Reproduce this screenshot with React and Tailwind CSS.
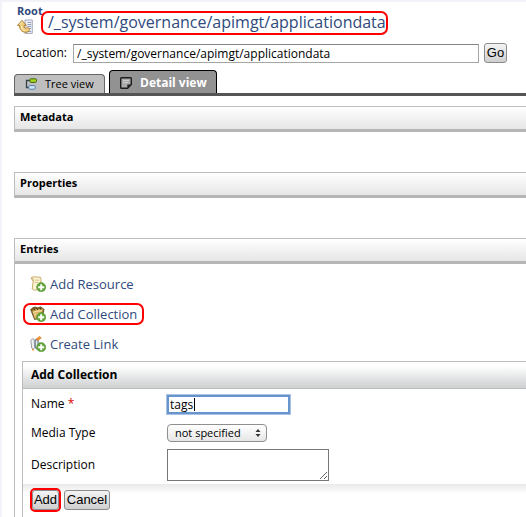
import React from "react";

function PlusBadge() {
  return (
    <g>
      <circle cx="11.2" cy="11.2" r="4.6" fill="#64a63c" stroke="#4c8f2c" strokeWidth=".5" />
      <path d="M11.2 8.2v6M8.2 11.2h6" stroke="#fff" strokeWidth="1.9" />
    </g>
  );
}

function ResourceIcon() {
  return (
    <svg className="size-4 shrink-0" viewBox="0 0 16 16" aria-hidden="true">
      <path d="M1 2.2 3 .8l7.3.4.8 2.2-.9 9.5-5.8 1.4L2.2 13l1-8z" fill="#fbf3d2" stroke="#c2a45e" strokeWidth=".9" />
      <path d="M1 2.2c1.8-.4 2.5.6 2.2 2.8" fill="none" stroke="#c2a45e" strokeWidth=".9" />
      <path d="M5 4.2h4.2M4.8 6.5h3.6" stroke="#d9bd80" strokeWidth=".9" />
      <PlusBadge />
    </svg>
  );
}

function CollectionIcon() {
  return (
    <svg className="size-4 shrink-0" viewBox="0 0 16 16" aria-hidden="true">
      <path d="M.6 3.6 3 1.6l3-.7 1 1 3.6-1 1.9 1 1.6 1.6-2 8.4-7.6 1.6z" fill="#8a6a26" stroke="#54401a" strokeWidth=".7" />
      <path d="M2.4 5 5.2 3.4l7.7-.6-1.5 6.4-6.5 3.8z" fill="#dcb562" />
      <path d="M3.1 7 6 5.2l5.9-.4M4 9.2l2.6-1.5" fill="none" stroke="#f9e8b8" strokeWidth="1" />
      <path d="M3.6 2.4l1.6 2.2M6.6 1.8l1.4 2.2M10 1.6l1 2.3" stroke="#3c2f10" strokeWidth=".9" />
      <PlusBadge />
    </svg>
  );
}

function LinkIcon() {
  return (
    <svg className="size-4 shrink-0" viewBox="0 0 16 16" aria-hidden="true">
      <path d="M.8 4.5C1.2 2.8 3 2.4 4.2 3.4l.5 8.1-1.4 1.8-1.6-1.2z" fill="#eef0f2" stroke="#8a929a" strokeWidth=".9" />
      <path d="M5.1 3.8 8 3.4l.8 8.2-1.5 1.9-1.9-1.4z" fill="#b7c0c8" stroke="#68737d" strokeWidth=".9" />
      <path d="M6.5 5v6" stroke="#eef1f4" strokeWidth=".9" />
      <path d="M6 3.2 9.6.5l1.6 1.4-3 2.3z" fill="#f39b32" stroke="#d96b16" strokeWidth=".7" />
      <path d="M2 13l1 2.4 1-2.4z" fill="#e58a29" />
      <PlusBadge />
    </svg>
  );
}

function UpIcon() {
  return (
    <svg className="h-4 w-4" viewBox="0 0 16 16" aria-hidden="true">
      <path d="M8 1h7.3v13.4H8z" fill="#eef0f8" stroke="#8e96aa" strokeWidth=".8" />
      <path d="M10.5 3.5h3.7M10.5 5.5h3.7M10.5 7.5h3.7M11.5 9.5h2.7M10.5 12.5h3.7" stroke="#8893b3" strokeWidth=".9" />
      <path d="M5 1.4.5 6.4h2c0 4.4 2.7 6.9 6.4 6.9 2 0 3.4-1.2 3.5-2.8-.1-1.5-1.5-2.4-2.8-1.6-1.7.8-2.7-.3-2.6-2.5h2.4z" fill="#f0cd7c" stroke="#a87726" strokeWidth=".9" strokeLinejoin="round" />
      <path d="M5 3 3 5.4M4.3 7c.2 2.6 1.6 4.2 3.8 4.7" fill="none" stroke="#fff3c8" strokeWidth="1" />
    </svg>
  );
}

function TreeIcon() {
  return (
    <svg className="h-3 w-3" viewBox="0 0 12 12" aria-hidden="true">
      <path d="M5 2.5H1.5v7H4" fill="none" stroke="#34444a" strokeWidth="1.3" />
      <rect x="5" y=".8" width="6.4" height="3.6" rx=".8" fill="#a5d819" stroke="#44621b" />
      <rect x="3.8" y="7.6" width="6.4" height="3.6" rx=".8" fill="#cfe6ff" stroke="#5a7da4" />
    </svg>
  );
}

function NoteIcon() {
  return (
    <svg className="h-3 w-3" viewBox="0 0 12 12" aria-hidden="true">
      <path d="M1.5.8h9a.8.8 0 0 1 .8.8v5.8l-3.7 3.8H1.5a.8.8 0 0 1-.8-.8V1.6a.8.8 0 0 1 .8-.8z" fill="#aaa" stroke="#1c1c1c" strokeWidth="1.4" />
      <path d="M7.4 11V7.4H11z" fill="#1c1c1c" />
      <path d="M3 3.5h6M3 5.5h5" stroke="#d0d0d0" strokeWidth=".9" />
    </svg>
  );
}

function SectionHeader({ children }) {
  return (
    <h2 className="h-[26px] border-t border-b-3 border-l border-[#bdbdbd] border-b-[#b5b6b7] bg-linear-to-b from-white to-[#e6e6e7] pl-[5px] text-[11px] leading-5 font-bold">
      {children}
    </h2>
  );
}

function Highlight({ className }) {
  return <span className={`pointer-events-none absolute border-2 border-[#ff0000] ${className}`} />;
}

const buttonClass =
  "h-5 rounded-[3px] border border-[#8c8c8c] bg-linear-to-b from-[#f4f4f4] to-[#cfcfcf] font-['Liberation_Sans',Arial,sans-serif] text-[13px] leading-4 text-black";

function Entry({ icon, children, highlighted }) {
  return (
    <li className="flex h-[30px] items-center">
      <a href="#" className="relative flex items-center gap-1 text-[#2f4a7d]">
        {icon}
        {children}
        {highlighted && <Highlight className="-inset-x-[7px] -inset-y-[2px] rounded-[7px]" />}
      </a>
    </li>
  );
}

export default function App() {
  return (
    <main className="min-h-screen overflow-hidden border-t-2 border-l-2 border-[#f2f2f9] bg-white font-['Open_Sans','Lucida_Grande',sans-serif] text-[12px] leading-[18px] text-black">
      <div className="pl-3">
        <header className="flex h-[38px] gap-[7px] pl-[3px]">
          <a href="#" className="flex w-6 flex-col pt-px text-[11px] leading-4 font-bold text-[#2f4a7d]">
            Root
            <UpIcon />
          </a>
          <h1 className="relative mt-[9px] h-6 text-[16px] leading-[22px] text-[#2f4a7d]">
            <a href="#">/_system/governance/apimgt/applicationdata</a>
            <Highlight className="inset-y-0 -right-[2px] -left-[7px] rounded-[7px]" />
          </h1>
        </header>
        <form className="flex h-[26px] items-center gap-[5px] pl-[2px]" onSubmit={(e) => e.preventDefault()}>
          <label htmlFor="location" className="w-[52px] whitespace-nowrap">Location:</label>
          <input id="location" defaultValue="/_system/governance/apimgt/applicationdata" className="h-[19px] w-[406px] min-w-0 border border-[#a6a6a6] border-t-[#858585] px-[3px] text-[12px] outline-none" />
          <button className={`${buttonClass} w-[23px]`}>Go</button>
        </form>
        <nav className="mt-1 flex items-end gap-1 border-b-3 border-[#555]">
          <button className="flex h-[19px] w-[91px] items-center gap-2 rounded-t-[4px] border border-b-0 border-[#666] bg-[#bfbfbf] pl-[10px] text-[11px]">
            <TreeIcon />
            Tree view
          </button>
          <button className="flex h-[23px] w-[108px] items-center gap-2 rounded-t-[4px] border border-b-0 border-black bg-[#929292] pt-[2px] pl-[10px] text-[12px] font-bold text-white">
            <NoteIcon />
            Detail view
          </button>
        </nav>
        <section className="mt-[10px] h-[66px]"><SectionHeader>Metadata</SectionHeader></section>
        <section className="h-[66px]"><SectionHeader>Properties</SectionHeader></section>
        <section>
          <SectionHeader>Entries</SectionHeader>
          <div className="border-l border-[#bdbdbd] pt-[5px] pl-[7px]">
            <ul className="pl-2 text-[13px]">
              <Entry icon={<ResourceIcon />}>Add Resource</Entry>
              <Entry icon={<CollectionIcon />} highlighted>Add Collection</Entry>
              <Entry icon={<LinkIcon />}>Create Link</Entry>
            </ul>
            <form className="mt-[2px] border-t border-l border-[#bdbdbd]" onSubmit={(e) => e.preventDefault()}>
              <h3 className="h-[27px] border-b border-[#bdbdbd] bg-linear-to-b from-white from-15% to-[#ced0d1] pl-2 text-[12px] leading-[26px] font-bold">Add Collection</h3>
              <div className="grid h-[95px] grid-cols-[136px_1fr] grid-rows-[30px_27px_38px] items-center pl-2">
                <label htmlFor="name">Name <span className="text-[#e00000]">*</span></label>
                <div className="relative flex">
                  <input id="name" defaultValue="tags" className="h-[19px] w-[123px] border-2 border-[#6794cb] px-px text-[12px] ring-1 ring-[#a9c4e6] outline-none" />
                  <span className="pointer-events-none absolute top-[3px] left-[27px] h-[13px] w-px bg-black" />
                </div>
                <label htmlFor="media">Media Type</label>
                <div className="relative w-[100px]">
                  <select id="media" className="block h-[18px] w-full appearance-none rounded-[4px] border border-[#8f8f8f] bg-linear-to-b from-white to-[#e6e6e6] pl-[7px] text-[11px] leading-4">
                    <option>not specified</option>
                  </select>
                  <svg className="pointer-events-none absolute top-[5px] right-[6px] h-2 w-[6px]" viewBox="0 0 6 8" aria-hidden="true">
                    <path d="M3 0l2.5 3h-5zM3 8 .5 5h5z" fill="#333" />
                  </svg>
                </div>
                <label htmlFor="description">Description</label>
                <textarea id="description" className="block h-8 w-[162px] resize border border-[#777] outline-none" />
              </div>
              <div className="flex h-[33px] gap-[5px] bg-linear-to-b from-[#e9e9e9] to-white to-30% pt-[6px] pl-[9px]">
                <span className="relative flex h-5">
                  <button className={`${buttonClass} w-[27px]`}>Add</button>
                  <Highlight className="-inset-x-[2px] -inset-y-[2px] rounded-[5px]" />
                </span>
                <button type="button" className={`${buttonClass} w-[46px]`}>Cancel</button>
              </div>
            </form>
          </div>
        </section>
      </div>
    </main>
  );
}
